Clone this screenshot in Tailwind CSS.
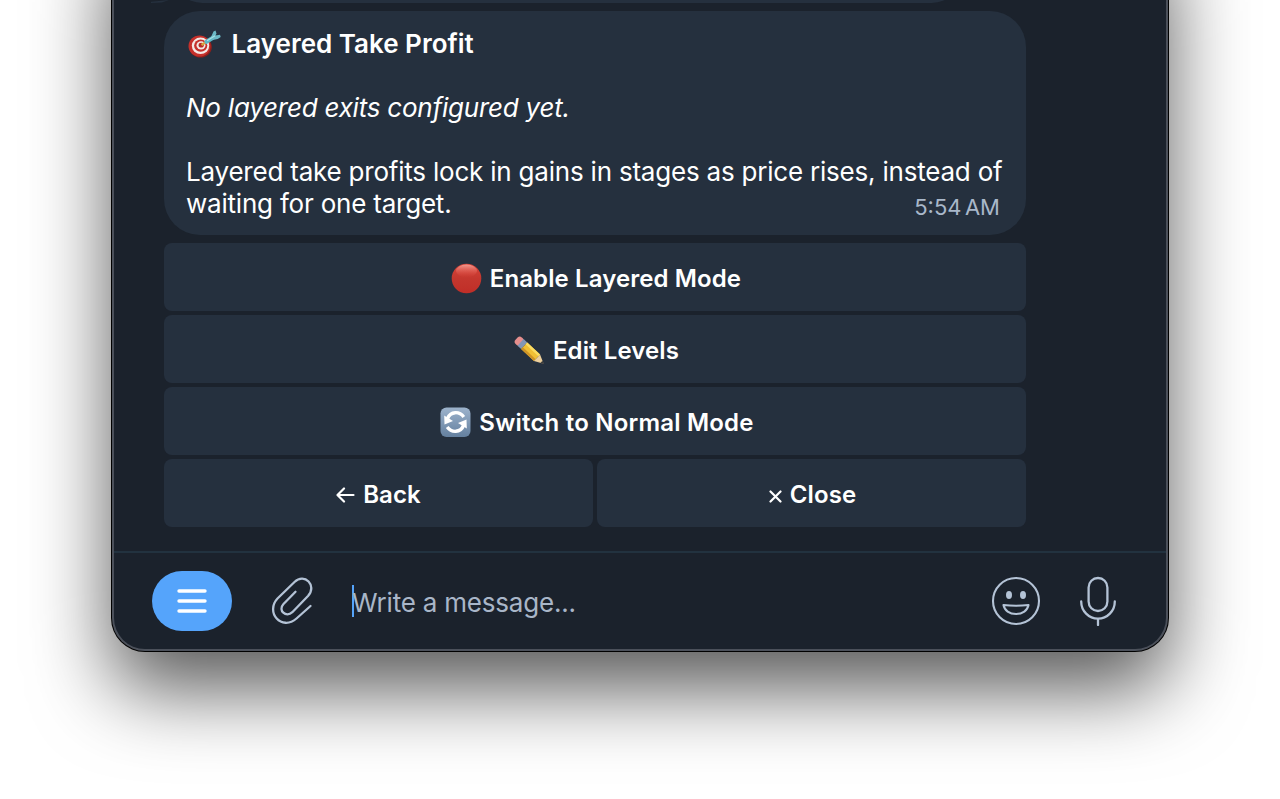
<!DOCTYPE html>
<html lang="en">

<head>
  <meta charset="UTF-8">
  <meta name="viewport" content="width=device-width, initial-scale=1.0">
  <title>Layered Take Profit</title>
  <script src="https://cdn.jsdelivr.net/npm/@tailwindcss/browser@4"></script>
</head>

<body class="bg-white h-[799px] overflow-hidden font-['Inter','Liberation_Sans',sans-serif] text-white">
  <main class="mx-auto -mt-20 w-[1056px] h-[731px] pt-20 flex flex-col rounded-b-[33px] bg-[#1b222c] overflow-hidden border-x-2 border-b-2 border-[#4b505a] shadow-[0_0_0_1px_#000,0_38px_80px_rgba(0,0,0,0.66)]">

    <!-- Message list -->
    <section class="grow pl-[50px]">
      <!-- End of the previous message -->
      <div class="h-[11px] flex items-start">
        <div class="-ml-[13px] h-[3px] w-[18px] bg-[#25303e] [clip-path:polygon(0_100%,0_60%,100%_0,60%_80%)]"></div>
        <div class="ml-[2px] -mt-[60px] w-[792px] h-[63px] rounded-[36px] bg-[#25303e]"></div>
      </div>

      <div class="w-[862px]">
        <article class="relative h-[224px] rounded-[36px] bg-[#25303e] pl-[22px] pt-[17.5px] text-[26px] leading-8 whitespace-nowrap">
          <h1 class="-mt-px mb-px flex items-center font-semibold">
            <svg class="w-[34px] h-[30px] mr-[11.5px] overflow-visible" viewBox="0 0 34 30" fill="none">
              <ellipse cx="14.500" cy="18" rx="11.300" ry="10.600" fill="#8c1f1c" />
              <ellipse cx="13.500" cy="17" rx="11" ry="10.600" fill="#c5302b" />
              <ellipse cx="14.500" cy="16.800" rx="8.700" ry="8.300" fill="#f3e9e5" />
              <ellipse cx="14.700" cy="16.600" rx="6.600" ry="6.200" fill="#c5302b" />
              <ellipse cx="15" cy="16.400" rx="4.500" ry="4.200" fill="#f3e9e5" />
              <ellipse cx="15.200" cy="16.200" rx="2.600" ry="2.400" fill="#b52a27" />
              <path d="M15.500 16l4.500-3" stroke="#d9a23a" stroke-width="2.200" />
              <path d="M20.500 12.800l6-3.800" stroke="#5bb5c4" stroke-width="4.200" stroke-linecap="round" />
              <path d="M25 8l2.500-5.500 2-1 1 3-1 2 4.500-.8.700 2.300-3 2-5 1z" fill="#6cb9c6" />
              <path d="M21 11.800l8-5" stroke="#a6e2e6" stroke-width="1.200" />
            </svg>
            <span>Layered Take Profit</span>
          </h1>
          <p class="mt-8 italic tracking-[-0.23px]">No layered exits configured yet.</p>
          <p class="mt-8 tracking-[-0.21px]">Layered take profits lock in gains in stages as price rises, instead of<br>waiting for one target.</p>
          <time class="absolute right-[26px] bottom-[8px] text-[22px] text-[#a9b8ca]">5:54<span class="text-[12px]"> </span>AM</time>
        </article>

        <!-- Inline keyboard -->
        <div class="mt-2 grid grid-cols-2 gap-1 text-[24px] font-semibold whitespace-nowrap tracking-[0.1px]">
          <button class="col-span-2 h-[68px] rounded-lg bg-[#25303e] flex items-center justify-center gap-2 pt-1 pl-0.5">
            <svg class="w-[31px] h-[32px]" viewBox="0 0 31 32">
              <defs>
                <linearGradient id="ball" x2="0" y2="1">
                  <stop offset="0" stop-color="#d9453a" />
                  <stop offset=".5" stop-color="#c4372e" />
                  <stop offset="1" stop-color="#c02e27" />
                </linearGradient>
                <linearGradient id="shine" x2="0" y2="1">
                  <stop offset="0" stop-color="#f09a90" />
                  <stop offset="1" stop-color="#e0473c" stop-opacity="0" />
                </linearGradient>
              </defs>
              <circle cx="15.500" cy="15.500" r="14.800" fill="url(#ball)" />
              <ellipse cx="15.500" cy="8" rx="10.500" ry="6.500" fill="url(#shine)" />
            </svg>
            <span>Enable Layered Mode</span>
          </button>
          <button class="col-span-2 h-[68px] rounded-lg bg-[#25303e] flex items-center justify-center gap-2 pt-1 pl-0.5">
            <svg class="w-[32px] h-[32px] overflow-visible" viewBox="0 0 32 32">
              <g transform="translate(5 5) rotate(43)">
                <rect x="-2" y="-4.500" width="7" height="9" rx="3" fill="#e58e8d" />
                <rect x="3.500" y="-4.500" width="5" height="9" fill="#8396b6" />
                <path d="M8.500-4.500H26v9H8.500z" fill="#f0bf35" />
                <path d="M8.500-4.500H26v2.500H8.500z" fill="#fbdc62" />
                <path d="M8.500 2H26v2.500H8.500z" fill="#cf9426" />
                <path d="M26-4.500L35 0l-9 4.500z" fill="#edcf9c" />
                <path d="M32-1.500L35.500 0 32 1.500z" fill="#3a3a3c" />
              </g>
            </svg>
            <span>Edit Levels</span>
          </button>
          <button class="col-span-2 h-[68px] rounded-lg bg-[#25303e] flex items-center justify-center gap-2 pt-1 pl-1">
            <svg class="w-[31px] h-[32px]" viewBox="0 0 31 32" fill="none">
              <defs>
                <linearGradient id="tile" x2="0" y2="1">
                  <stop offset="0" stop-color="#9db3cc" />
                  <stop offset="1" stop-color="#64809f" />
                </linearGradient>
              </defs>
              <rect x=".5" y=".5" width="30" height="29.500" rx="6" fill="url(#tile)" />
              <path d="M7.500 11.500C10.500 4 19.500 4 23.800 10M23.500 18.500C20.500 26 11.500 26 7.200 20" stroke="#fff" stroke-width="3.400" />
              <path d="M4.200 8.500l.3 9 8.500-3.500zM26.800 21.500l-.3-9-8.500 3.500z" fill="#fff" />
            </svg>
            <span class="tracking-[0.2px]">Switch to Normal Mode</span>
          </button>
          <button class="h-[68px] rounded-lg bg-[#25303e] flex items-center justify-center gap-2 pt-1">
            <svg class="w-[19px] h-[18px]" viewBox="0 0 19 18" fill="none" stroke="#fff" stroke-width="2.200" stroke-linecap="round" stroke-linejoin="round">
              <path d="M8 2.500L1.500 9 8 15.500M1.500 9H17.500" />
            </svg>
            <span>Back</span>
          </button>
          <button class="h-[68px] rounded-lg bg-[#25303e] flex items-center justify-center gap-2 pt-1 pl-0.5">
            <svg class="w-[13px] h-[13px] mt-0.5" viewBox="0 0 13 13" fill="none" stroke="#fff" stroke-width="2.200" stroke-linecap="round">
              <path d="M1.500 1.500l10 10M11.500 1.500l-10 10" />
            </svg>
            <span>Close</span>
          </button>
        </div>
      </div>
    </section>

    <!-- Composer -->
    <footer class="h-[98px] shrink-0 border-t-2 border-[#22323f] pl-[38px] pr-[49px] flex items-center">
      <button class="w-20 h-[60px] rounded-[30px] bg-[#55a4fb] flex items-center justify-center">
        <svg class="w-8 h-8" viewBox="0 0 32 32" stroke="#fff" stroke-width="3.400" stroke-linecap="round">
          <path d="M3 6h26M3 16h26M3 26h26" />
        </svg>
      </button>
      <svg class="ml-[38px] w-[44px] h-[50px]" viewBox="0 0 44 50" fill="none" stroke="#b4c3d6" stroke-width="2.300" stroke-linecap="round" stroke-linejoin="round">
        <path d="M25.500 15.800L13.500 28c-6 6.500 2.600 14 8.800 8.200L38 20C47.500 9.500 34.500-3.500 24.500 6L7.500 22.500C-5 36 11.500 55.500 26.500 42.500L40.500 30" />
      </svg>
      <div class="ml-[38px] w-0.5 h-8 bg-[#55a4fb]"></div>
      <span class="-ml-0.5 mt-[3px] grow text-[26px] leading-8 text-[#a9b6c8] tracking-[-0.2px]">Write a message...</span>
      <svg class="w-[50px] h-[50px]" viewBox="0 0 50 50" fill="none" stroke="#b4c3d6" stroke-width="2.100">
        <circle cx="25" cy="25" r="23" />
        <ellipse cx="18" cy="19" rx="3" ry="4" fill="#b4c3d6" stroke="none" />
        <ellipse cx="32" cy="19" rx="3" ry="4" fill="#b4c3d6" stroke="none" />
        <path d="M12.500 29q12.500 1.500 25 0C36.500 34.500 31.500 38 25 38S13.500 34.500 12.500 29z" stroke-linejoin="round" />
      </svg>
      <svg class="ml-[38px] w-[38px] h-[50px]" viewBox="0 0 38 50" fill="none" stroke="#b4c3d6" stroke-width="2.300" stroke-linecap="round">
        <rect x="9.600" y="2" width="18.800" height="33" rx="9.400" />
        <path d="M2.200 25.500a16.800 17.200 0 0 0 33.600 0M19 43v6" />
      </svg>
    </footer>
  </main>
</body>

</html>
